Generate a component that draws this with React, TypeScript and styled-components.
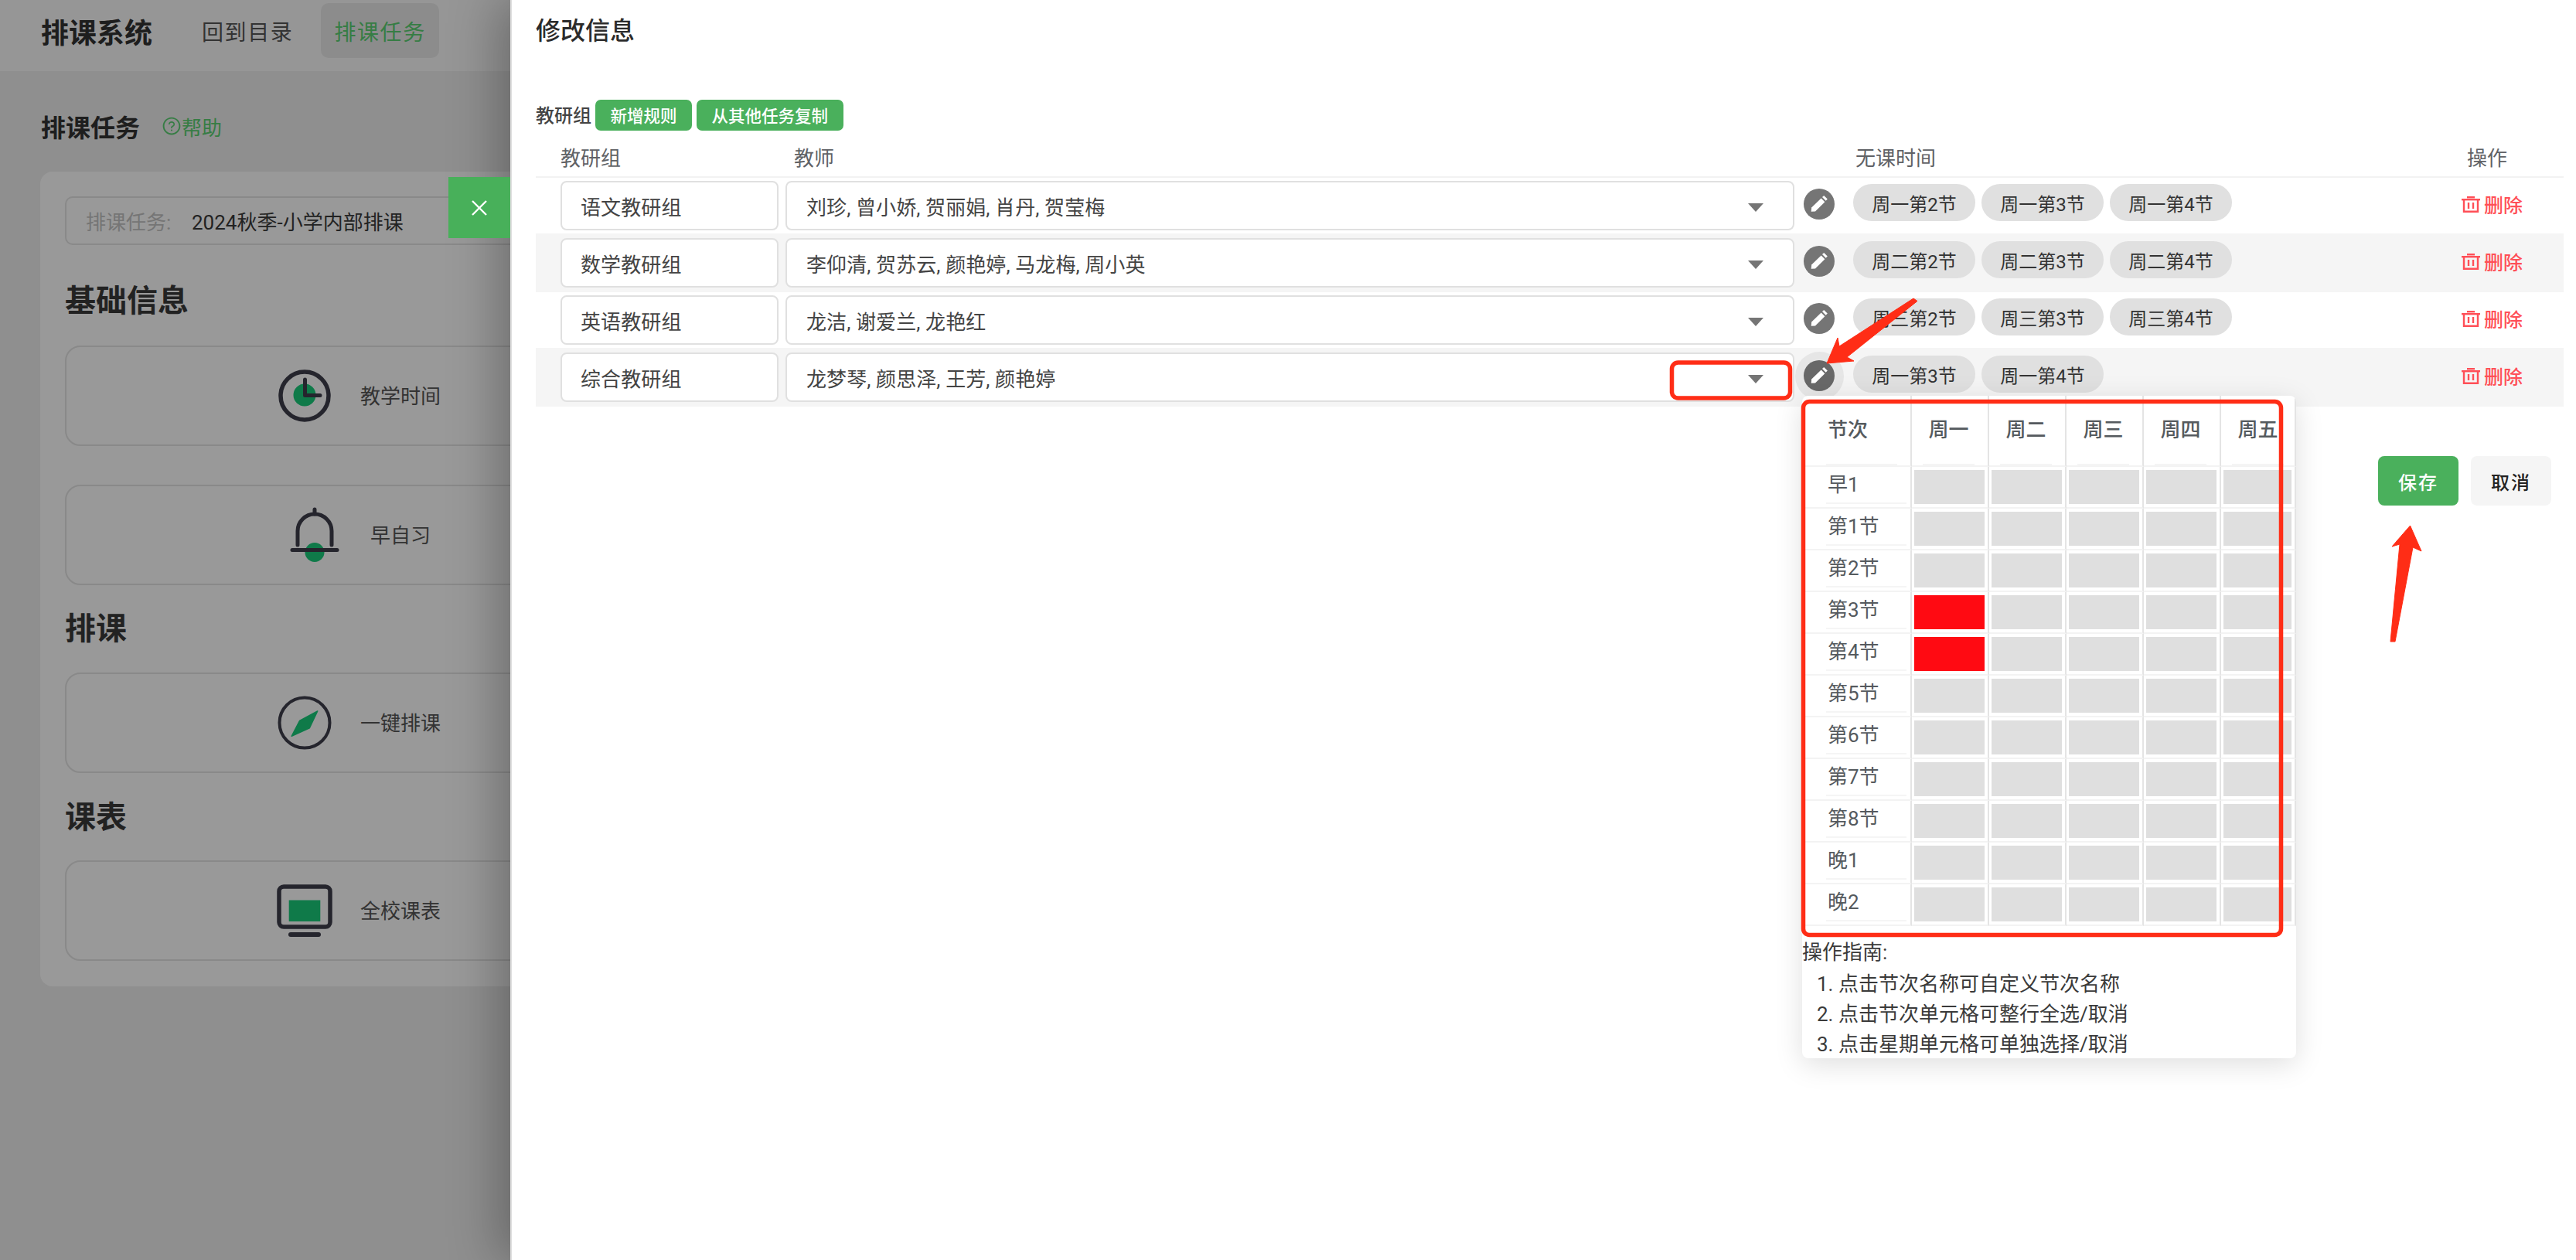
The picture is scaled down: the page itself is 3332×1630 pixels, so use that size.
import styled, { createGlobalStyle } from "styled-components";
import { AiOutlineQuestionCircle } from "react-icons/ai";

const GlobalStyle = createGlobalStyle`
  html, body {
    margin: 0;
    padding: 0;
    width: 3332px;
    height: 1630px;
    overflow: hidden;
    background: #eeeeee;
    font-family: Roboto, "Noto Sans CJK SC", sans-serif;
    color: #333;
  }
  * {
    box-sizing: border-box;
  }
`;

const Shell = styled.div`
  position: relative;
  width: 3332px;
  height: 1630px;
  overflow: hidden;
`;

/* page behind the drawer */
const TopBar = styled.header`
  display: flex;
  align-items: center;
  height: 92px;
  padding: 4px 0 17px 53px;
  background: #fbfbfb;
`;

const Brand = styled.div`
  width: 191px;
  font-size: 36px;
  font-weight: 700;
  color: #333;
`;

const NavItem = styled.div<{ $active?: boolean }>`
  display: flex;
  align-items: center;
  height: 71px;
  padding: 0 17px;
  margin-right: 19px;
  border-radius: 10px;
  font-size: 28px;
  letter-spacing: 1.6px;
  color: ${(p) => (p.$active ? "#5ad072" : "#555")};
  background: ${(p) => (p.$active ? "#e9e9e9" : "transparent")};
`;

const Main = styled.main`
  padding: 49px 0 0 52px;
`;

const PageHead = styled.div`
  display: flex;
  align-items: center;
  height: 44px;
  padding-left: 1px;
  gap: 28px;
`;

const PageTitle = styled.h1`
  margin: 0;
  font-size: 32px;
  font-weight: 700;
  color: #333;
`;

const HelpLink = styled.span`
  display: flex;
  align-items: center;
  font-size: 26px;
  color: #5ad072;
`;

const Card = styled.section`
  width: 1000px;
  margin-top: 37px;
  padding: 32px 32px 33px;
  background: #fff;
  border-radius: 16px;
`;

const TaskInput = styled.div`
  display: flex;
  align-items: center;
  height: 63px;
  padding-left: 25px;
  border: 2px solid #e4e4e4;
  border-radius: 10px;
  font-size: 26px;
`;

const TaskLabel = styled.span`
  width: 137px;
  white-space: nowrap;
  color: #c4c4c4;
`;

const TaskValue = styled.span`
  color: #3a3a3a;
`;

const SectionTitle = styled.h2<{ $top: number }>`
  margin: ${(p) => p.$top}px 0 0;
  height: 60px;
  line-height: 64px;
  font-size: 40px;
  font-weight: 700;
  color: #3a3a3a;
`;

const MenuItem = styled.div<{ $top: number }>`
  display: flex;
  align-items: center;
  justify-content: center;
  gap: 36px;
  width: 760px;
  height: 130px;
  margin-top: ${(p) => p.$top}px;
  border: 2px solid #e4e4e4;
  border-radius: 20px;
  font-size: 26px;
  color: #555;
`;

const MenuText = styled.span`
  margin-bottom: 3px;
`;

const Scrim = styled.div`
  position: absolute;
  inset: 0;
  background: rgba(0, 0, 0, 0.4);
`;

/* drawer */
const Drawer = styled.aside`
  position: absolute;
  top: 0;
  right: 0;
  bottom: 0;
  width: 2672px;
  padding: 0 16px 0 31px;
  background: #fff;
  border-left: 2px solid #dedede;
  box-shadow: -16px 0 60px rgba(0, 0, 0, 0.28);
`;

const CloseTab = styled.button`
  position: absolute;
  top: 229px;
  left: -82px;
  display: flex;
  align-items: center;
  justify-content: center;
  width: 80px;
  height: 79px;
  padding: 0;
  border: 0;
  background: #48b05a;
`;

const DrawerTitle = styled.h3`
  margin: 0;
  height: 80px;
  line-height: 80px;
  font-size: 32px;
  font-weight: 500;
  color: #2b2b2b;
`;

const Toolbar = styled.div`
  display: flex;
  align-items: center;
  gap: 6px;
  height: 40px;
  margin-top: 49px;
  font-size: 24px;
  font-weight: 500;
  color: #444;
`;

const ToolLabel = styled.span`
  margin-right: -1px;
  margin-bottom: 3px;
`;

const TagButton = styled.button`
  height: 40px;
  padding: 0 19.5px 2px;
  border: 0;
  border-radius: 7px;
  background: #4ab05c;
  color: #fff;
  font-family: inherit;
  font-size: 21.5px;
  font-weight: 500;
`;

const columns = "291px 1317px 64px 1fr 131px";

const HeadRow = styled.div`
  display: grid;
  grid-template-columns: ${columns};
  align-items: center;
  height: 54px;
  margin-top: 7px;
  padding-left: 32px;
  border-bottom: 2px solid #f2f2f2;
  font-size: 26px;
  color: #606266;
`;

const HeadCell = styled.div<{ $inset?: number }>`
  padding-left: ${(p) => p.$inset ?? 0}px;
`;

const Row = styled.div<{ $striped: boolean }>`
  display: grid;
  grid-template-columns: ${columns};
  align-items: start;
  padding: ${(p) => (p.$striped ? "6px 0 6px 32px" : "4px 0 4px 32px")};
  background: ${(p) => (p.$striped ? "#f5f5f5" : "#fff")};
`;

const FieldBox = styled.div`
  display: flex;
  align-items: center;
  justify-content: space-between;
  height: 64px;
  background: #fff;
  border: 2px solid #e0e0e0;
  border-radius: 8px;
  font-size: 26px;
  letter-spacing: 0.1px;
  color: #444;
`;

const GroupField = styled(FieldBox)`
  width: 282px;
  padding-left: 24px;
`;

const TeacherField = styled(FieldBox)`
  width: 1305px;
  padding: 0 38px 0 25px;
`;

const Caret = styled.span`
  margin-top: 4px;
  border-style: solid;
  border-width: 11px 10px 0;
  border-color: #757575 transparent transparent;
`;

const PencilWrap = styled.div`
  position: relative;
  width: 40px;
  height: 40px;
  margin-top: 10px;
`;

const PencilHalo = styled.div`
  position: absolute;
  inset: -11.5px;
  border-radius: 50%;
  background: #e6e6e6;
`;

const PencilButton = styled.div<{ $open?: boolean }>`
  position: relative;
  width: 40px;
  height: 40px;
  border-radius: 50%;
  background: ${(p) => (p.$open ? "#686868" : "#757575")};
`;

const Chips = styled.div`
  display: flex;
  gap: 8px;
  margin-top: 4px;
`;

const Chip = styled.span`
  display: flex;
  align-items: center;
  justify-content: center;
  width: 158px;
  height: 48px;
  border-radius: 24px;
  background: #e0e0e0;
  font-size: 24px;
  color: #333;
`;

const DeleteLink = styled.span`
  display: flex;
  align-items: center;
  gap: 5px;
  height: 60px;
  margin-left: -1px;
  font-size: 25px;
  font-weight: 500;
  color: #ff4f57;
`;

const Footer = styled.div`
  display: flex;
  justify-content: flex-end;
  gap: 16px;
  margin-top: 64px;
  padding-right: 16px;
`;

const FootButton = styled.button<{ $primary?: boolean }>`
  width: 104px;
  height: 64px;
  border: 0;
  border-radius: 8px;
  background: ${(p) => (p.$primary ? "#4ab05c" : "#f5f5f5")};
  color: ${(p) => (p.$primary ? "#fff" : "#222")};
  font-family: inherit;
  font-size: 24px;
  font-weight: 500;
  letter-spacing: 2px;
`;

/* time picker popup */
const Popup = styled.div`
  position: absolute;
  top: 46px;
  left: -2px;
  z-index: 3;
  width: 639px;
  height: 857px;
  background: #fff;
  border-radius: 8px;
  box-shadow: 0 8px 36px rgba(0, 0, 0, 0.13);
  overflow: hidden;
`;

const TimeGrid = styled.div`
  display: grid;
  grid-template-columns: 142px 100px 100px 100px 100px 97px;
  grid-auto-rows: 54px;
  grid-template-rows: 92px;
`;

const GridCell = styled.div`
  border-right: 2px solid #e4e4e4;
  border-bottom: 2px solid #f3f3f3;
`;

const NameCell = styled(GridCell)`
  padding-left: 31px;
`;

const NameBox = styled.div<{ $head?: boolean }>`
  width: ${(p) => (p.$head ? 92 : 104)}px;
  height: ${(p) => (p.$head ? 90 : 48)}px;
  padding-left: 2px;
  line-height: ${(p) => (p.$head ? 88 : 46)}px;
  border-bottom: 2px solid #f5f5f5;
  font-size: 26px;
  font-weight: ${(p) => (p.$head ? 500 : 400)};
  color: #555a5e;
`;

const DayBox = styled.div`
  width: 67px;
  height: 90px;
  margin-left: 14px;
  line-height: 88px;
  text-align: center;
  border-bottom: 2px solid #f5f5f5;
  font-size: 26px;
  font-weight: 500;
  color: #555a5e;
`;

const SlotCell = styled(GridCell)`
  padding: 4px 4px 4px 3px;
`;

const Slot = styled.div<{ $off: boolean }>`
  height: 44px;
  background: ${(p) => (p.$off ? "#ff0a12" : "#dfdfdf")};
`;

const Guide = styled.div`
  padding-top: 15px;
  font-size: 26px;
  line-height: 39px;
  color: #3a3a3a;
`;

const GuideList = styled.div`
  margin-top: 2px;
  padding-left: 19px;
`;

const Marks = styled.svg`
  position: absolute;
  top: 0;
  left: 0;
  z-index: 5;
  pointer-events: none;
`;

const DARK = "#3e3e4b";
const GREEN = "#19cb7b";

function ClockIcon() {
  return (
    <svg width="72" height="72" viewBox="0 0 72 72" fill="none">
      <circle cx="36" cy="36" r="31" stroke={DARK} strokeWidth="5.5" />
      <circle cx="36" cy="35" r="14.5" fill={GREEN} />
      <path d="M36.5 15V35.5H56" stroke={DARK} strokeWidth="5" strokeLinecap="round" strokeLinejoin="round" />
    </svg>
  );
}

function BellIcon() {
  return (
    <svg width="72" height="72" viewBox="0 0 72 72" fill="none">
      <circle cx="36" cy="58.5" r="12.5" fill={GREEN} />
      <path d="M36 3V9" stroke={DARK} strokeWidth="5" strokeLinecap="round" />
      <path d="M14 49V31A22 22 0 0 1 58 31V49" stroke={DARK} strokeWidth="5" strokeLinecap="round" />
      <path d="M7 55.5H65" stroke={DARK} strokeWidth="5" strokeLinecap="round" />
    </svg>
  );
}

function CompassIcon() {
  return (
    <svg width="72" height="72" viewBox="0 0 72 72" fill="none">
      <circle cx="36" cy="36" r="32.5" stroke={DARK} strokeWidth="4" />
      <path d="M52.7 21L29.5 33.5L19.2 53.3L42.4 42.8Z" fill={GREEN} stroke={GREEN} strokeWidth="1.5" strokeLinejoin="round" />
    </svg>
  );
}

function ScreenIcon() {
  return (
    <svg width="72" height="72" viewBox="0 0 72 72" fill="none">
      <rect x="3" y="5" width="66" height="52" rx="6" stroke={DARK} strokeWidth="5.5" />
      <rect x="15.7" y="22.5" width="40.6" height="27.5" fill={GREEN} />
      <rect x="15" y="64" width="42" height="6" rx="3" fill={DARK} />
    </svg>
  );
}

function PencilIcon() {
  return (
    <svg width="40" height="40" viewBox="0 0 40 40" fill="#fff">
      <path d="M9.7 29.8L10.2 24.6L22.6 12.4L27.4 17.2L15 29.4Z" />
      <path d="M24 11L26.2 9L30.8 13.6L28.7 15.8Z" />
    </svg>
  );
}

function TrashIcon() {
  return (
    <svg width="24" height="21" viewBox="0 0 24 21" fill="none" stroke="#ff4f57" strokeWidth="2.4">
      <path d="M0 4.2H24" />
      <path d="M7 1.2H17" />
      <path d="M3 4V19.8H21V4" />
      <path d="M9 8V16M15 8V16" />
    </svg>
  );
}

function CloseIcon() {
  return (
    <svg width="20" height="20" viewBox="0 0 20 20" fill="none" stroke="#fff" strokeWidth="2.4">
      <path d="M1 1L19 19M19 1L1 19" />
    </svg>
  );
}

const rules = [
  {
    group: "语文教研组",
    teachers: "刘珍, 曾小娇, 贺丽娟, 肖丹, 贺莹梅",
    times: ["周一第2节", "周一第3节", "周一第4节"],
  },
  {
    group: "数学教研组",
    teachers: "李仰清, 贺苏云, 颜艳婷, 马龙梅, 周小英",
    times: ["周二第2节", "周二第3节", "周二第4节"],
  },
  {
    group: "英语教研组",
    teachers: "龙洁, 谢爱兰, 龙艳红",
    times: ["周三第2节", "周三第3节", "周三第4节"],
  },
  {
    group: "综合教研组",
    teachers: "龙梦琴, 颜思泽, 王芳, 颜艳婷",
    times: ["周一第3节", "周一第4节"],
  },
];

const days = ["周一", "周二", "周三", "周四", "周五"];
const periods = ["早1", "第1节", "第2节", "第3节", "第4节", "第5节", "第6节", "第7节", "第8节", "晚1", "晚2"];

function TimePicker() {
  return (
    <Popup>
      <TimeGrid>
        <NameCell>
          <NameBox $head>节次</NameBox>
        </NameCell>
        {days.map((d) => (
          <GridCell key={d}>
            <DayBox>{d}</DayBox>
          </GridCell>
        ))}
        {periods.flatMap((p) => [
          <NameCell key={p}>
            <NameBox>{p}</NameBox>
          </NameCell>,
          ...days.map((d, i) => (
            <SlotCell key={p + d}>
              <Slot $off={i === 0 && (p === "第3节" || p === "第4节")} />
            </SlotCell>
          )),
        ])}
      </TimeGrid>
      <Guide>
        操作指南:
        <GuideList>
          <div>1. 点击节次名称可自定义节次名称</div>
          <div>2. 点击节次单元格可整行全选/取消</div>
          <div>3. 点击星期单元格可单独选择/取消</div>
        </GuideList>
      </Guide>
    </Popup>
  );
}

export default function App() {
  return (
    <Shell>
      <GlobalStyle />
      <TopBar>
        <Brand>排课系统</Brand>
        <NavItem>回到目录</NavItem>
        <NavItem $active>排课任务</NavItem>
      </TopBar>
      <Main>
        <PageHead>
          <PageTitle>排课任务</PageTitle>
          <HelpLink>
            <AiOutlineQuestionCircle size={26} />
            帮助
          </HelpLink>
        </PageHead>
        <Card>
          <TaskInput>
            <TaskLabel>排课任务:</TaskLabel>
            <TaskValue>2024秋季-小学内部排课</TaskValue>
          </TaskInput>
          <SectionTitle $top={41}>基础信息</SectionTitle>
          <MenuItem $top={29}>
            <ClockIcon />
            <MenuText>教学时间</MenuText>
          </MenuItem>
          <MenuItem $top={50}>
            <BellIcon />
            <MenuText>早自习</MenuText>
          </MenuItem>
          <SectionTitle $top={25}>排课</SectionTitle>
          <MenuItem $top={28}>
            <CompassIcon />
            <MenuText>一键排课</MenuText>
          </MenuItem>
          <SectionTitle $top={26}>课表</SectionTitle>
          <MenuItem $top={27}>
            <ScreenIcon />
            <MenuText>全校课表</MenuText>
          </MenuItem>
        </Card>
      </Main>
      <Scrim />
      <Drawer>
        <CloseTab type="button">
          <CloseIcon />
        </CloseTab>
        <DrawerTitle>修改信息</DrawerTitle>
        <Toolbar>
          <ToolLabel>教研组</ToolLabel>
          <TagButton type="button">新增规则</TagButton>
          <TagButton type="button">从其他任务复制</TagButton>
        </Toolbar>
        <HeadRow>
          <HeadCell>教研组</HeadCell>
          <HeadCell $inset={11}>教师</HeadCell>
          <HeadCell />
          <HeadCell $inset={3}>无课时间</HeadCell>
          <HeadCell $inset={6}>操作</HeadCell>
        </HeadRow>
        {rules.map((rule, index) => (
          <Row key={rule.group} $striped={index % 2 === 1}>
            <GroupField>{rule.group}</GroupField>
            <TeacherField>
              {rule.teachers}
              <Caret />
            </TeacherField>
            <PencilWrap>
              {index === 3 && <PencilHalo />}
              <PencilButton $open={index === 3}>
                <PencilIcon />
              </PencilButton>
              {index === 3 && <TimePicker />}
            </PencilWrap>
            <Chips>
              {rule.times.map((t) => (
                <Chip key={t}>{t}</Chip>
              ))}
            </Chips>
            <DeleteLink>
              <TrashIcon />
              删除
            </DeleteLink>
          </Row>
        ))}
        <Footer>
          <FootButton type="button" $primary>
            保存
          </FootButton>
          <FootButton type="button">取消</FootButton>
        </Footer>
      </Drawer>
      <Marks width="3332" height="1630" viewBox="0 0 3332 1630" fill="none">
        <rect x="2162.5" y="469" width="153" height="46" rx="8" stroke="#ff2d16" strokeWidth="5.5" />
        <rect x="2332.5" y="519.5" width="618" height="690" rx="8" stroke="#ff2d16" strokeWidth="5.5" />
        <path
          d="M2475 386L2480 389.5L2389 462L2398 467L2363 470L2377 437L2379 448Z"
          fill="#ff2d16"
          stroke="#ff2d16"
          strokeLinejoin="round"
        />
        <path
          d="M3117.5 680L3132 713L3121 708L3098 830H3092L3104 704L3094 707Z"
          fill="#ff2d16"
          stroke="#ff2d16"
          strokeLinejoin="round"
        />
      </Marks>
    </Shell>
  );
}
